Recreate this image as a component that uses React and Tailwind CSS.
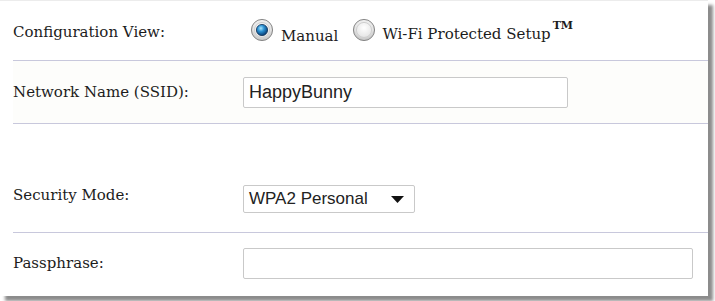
import React from "react";

function Radio({ checked }) {
  const id = checked ? "a" : "b";
  return (
    <svg width="24" height="24" viewBox="0 0 24 24" className="shrink-0">
      <defs>
        <radialGradient id={"ring" + id} cx="50%" cy="40%" r="60%">
          <stop offset="0%" stopColor="#ffffff" />
          <stop offset="65%" stopColor="#e8e8e8" />
          <stop offset="100%" stopColor="#b9b9b9" />
        </radialGradient>
        <radialGradient id={"dot" + id} cx="40%" cy="35%" r="65%">
          <stop offset="0%" stopColor="#a8e6ff" />
          <stop offset="45%" stopColor="#2a8fd0" />
          <stop offset="100%" stopColor="#093d74" />
        </radialGradient>
      </defs>
      <circle cx="12" cy="12" r="10.6" fill={"url(#ring" + id + ")"} stroke="#8a8a8a" strokeWidth="1" />
      <circle cx="12" cy="12" r="7.6" fill="none" stroke="#cfcfcf" strokeWidth="1" />
      {checked && <circle cx="12" cy="12" r="5.6" fill={"url(#dot" + id + ")"} stroke="#0d3158" strokeWidth="0.8" />}
    </svg>
  );
}

const label = "text-[15px] text-[#1c1c1c] w-[230px] shrink-0";
const serif = { fontFamily: '"DejaVu Serif", serif' };
const sans = { fontFamily: '"Liberation Sans", Arial, sans-serif' };

export default function App() {
  return (
    <div className="w-[715px] h-[301px] bg-white overflow-hidden">
      <div
        className="w-[708px] h-[296px] bg-white border-t border-[#ececec] pl-[13px] flex flex-col shadow-[5px_5px_3px_rgba(0,0,0,0.45)]"
        style={serif}
      >
        <div className="h-[59px] flex items-center pt-[3px]">
          <div className={label}>Configuration View:</div>
          <div className="flex items-center ml-[7px] -mt-[4px]">
            <Radio checked />
            <span className="ml-[7px] mt-[12px] text-[15px] text-[#1c1c1c]">Manual</span>
            <span className="ml-[14px]"><Radio /></span>
            <span className="ml-[6px] mt-[8px] text-[15px] text-[#1c1c1c] flex items-start">
              Wi-Fi Protected Setup
              <span className="text-[11px] ml-[2px] -mt-[3px] leading-none font-bold">TM</span>
            </span>
          </div>
        </div>
        <div className="h-px bg-[#c8c8dc]" />
        <div className="h-[62px] flex items-center bg-[#fdfdfb]">
          <div className={label}>Network Name (SSID):</div>
          <div
            className="w-[325px] h-[31px] border border-[#c9c9c9] rounded-[2px] bg-white flex items-center px-[5px] text-[18px] text-[#222]"
            style={sans}
          >
            HappyBunny
          </div>
        </div>
        <div className="h-px bg-[#c8c8dc]" />
        <div className="h-[108px] flex items-end pb-[19px]">
          <div className={label + " mb-[7px]"}>Security Mode:</div>
          <div
            className="w-[172px] h-[28px] border border-[#c9c9c9] rounded-[2px] bg-white flex items-center pl-[5px] pr-[10px] text-[17px] text-[#222] justify-between"
            style={sans}
          >
            <span>WPA2 Personal</span>
            <svg width="13" height="7" viewBox="0 0 13 7">
              <path d="M0 0 H13 L6.5 7 Z" fill="#111" />
            </svg>
          </div>
        </div>
        <div className="h-px bg-[#c8c8dc]" />
        <div className="h-[63px] flex items-center pb-[2px]">
          <div className={label}>Passphrase:</div>
          <div className="w-[450px] h-[31px] border border-[#c9c9c9] rounded-[2px] bg-white" />
        </div>
      </div>
    </div>
  );
}
